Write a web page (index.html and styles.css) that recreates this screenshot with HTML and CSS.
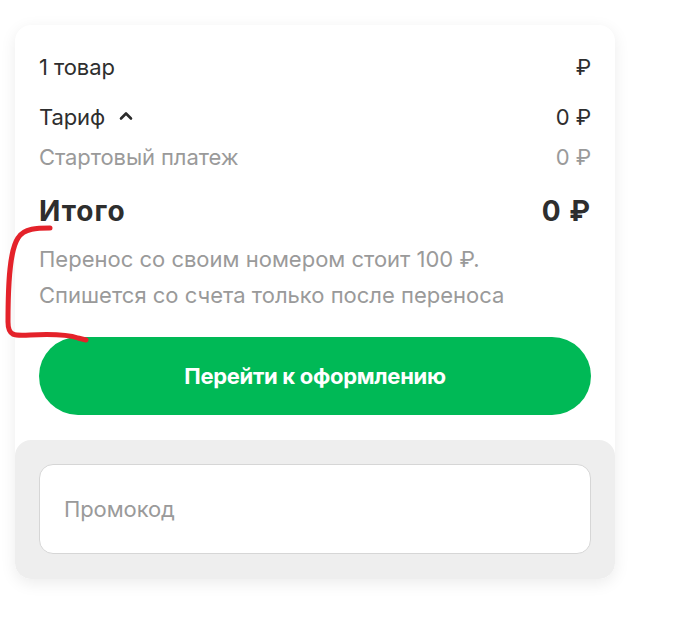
FILE: index.html
```html
<!DOCTYPE html>
<html lang="ru">
<head>
<meta charset="utf-8">
<link rel="stylesheet" href="styles.css">
</head>
<body>
<div class="page">
  <div class="card">
    <div class="main">
      <div class="row row-first">
        <span>1 товар</span>
        <span>₽</span>
      </div>
      <div class="row row-tariff">
        <span class="tariff">Тариф
          <svg class="chev" width="16" height="12" viewBox="0 0 16 12"><path d="M3 8.5 L8 3.5 L13 8.5" fill="none" stroke="#2b2b2b" stroke-width="2.6" stroke-linecap="round" stroke-linejoin="round"/></svg>
        </span>
        <span>0 ₽</span>
      </div>
      <div class="row row-sub">
        <span>Стартовый платеж</span>
        <span>0 ₽</span>
      </div>
      <div class="row row-total">
        <span>Итого</span>
        <span>0 ₽</span>
      </div>
      <p class="note">Перенос со своим номером стоит 100 ₽.<br>Спишется со счета только после переноса</p>
      <button class="cta">Перейти к оформлению</button>
    </div>
    <div class="promo">
      <div class="input">Промокод</div>
    </div>
  </div>
  <svg class="mark" width="100" height="150" viewBox="0 0 100 150"><path d="M50 28 C38 28 24 28 18 38 C10 50 8 80 8 122 C8 136 14 136 30 135 C50 134 66 134 78 138 L86 140" fill="none" stroke="#e4222a" stroke-width="5" stroke-linecap="round" stroke-linejoin="round"/></svg>
</div>
</body>
</html>
```
FILE: styles.css
```css
html, body {
  margin: 0;
  padding: 0;
  background: #ffffff;
}
body {
  font-family: Inter, "Noto Sans", sans-serif;
  color: #2e2e2e;
}
.page {
  position: relative;
  padding: 25px 0 0 15px;
  width: 676px;
  height: 625px;
  box-sizing: border-box;
}
.card {
  width: 600px;
  border-radius: 16px;
  background: #ffffff;
  box-shadow: 0 4px 16px rgba(0, 0, 0, 0.08);
  overflow: hidden;
}
.main {
  padding: 28px 24px 25px 24px;
}
.row {
  display: flex;
  justify-content: space-between;
  align-items: center;
  font-size: 22px;
  line-height: 28px;
  letter-spacing: -0.1px;
}
.row-tariff {
  margin-top: 22px;
}
.tariff {
  display: flex;
  align-items: center;
  gap: 13px;
}
.chev {
  display: block;
  margin-top: -2px;
}
.row-sub {
  margin-top: 12px;
  color: #9a9a9a;
}
.row-total {
  margin-top: 24px;
  font-size: 28px;
  font-weight: 700;
  line-height: 32px;
  letter-spacing: 1px;
}
.note {
  margin: 14px 0 0 0;
  font-size: 22px;
  line-height: 36px;
  color: #9a9a9a;
  letter-spacing: 0;
}
.cta {
  display: block;
  width: 100%;
  height: 78px;
  margin-top: 24px;
  border: none;
  border-radius: 39px;
  background: #00b956;
  color: #ffffff;
  font-family: Inter, "Noto Sans", sans-serif;
  font-size: 22px;
  font-weight: 700;
  letter-spacing: -0.3px;
}
.promo {
  background: #eeeeee;
  border-radius: 16px;
  padding: 24px 24px 25px 24px;
}
.input {
  height: 90px;
  box-sizing: border-box;
  border: 1px solid #d6d6d6;
  border-radius: 14px;
  background: #ffffff;
  padding-left: 24px;
  display: flex;
  align-items: center;
  font-size: 22px;
  color: #9a9a9a;
  letter-spacing: -0.1px;
}
.mark {
  position: absolute;
  left: 0;
  top: 200px;
}
```
